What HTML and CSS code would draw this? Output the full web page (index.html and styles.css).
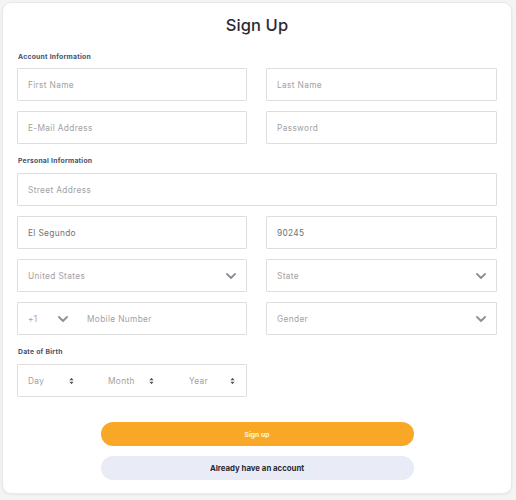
FILE: index.html
```html
<!DOCTYPE html>
<html lang="en">
<head>
<meta charset="utf-8">
<title>Sign Up</title>
<link rel="stylesheet" href="styles.css">
</head>
<body>
<div class="card">
  <h1 class="title">Sign Up</h1>

  <div class="section-label">Account Information</div>
  <div class="grid">
    <div class="field">First Name</div>
    <div class="field">Last Name</div>
    <div class="field">E-Mail Address</div>
    <div class="field">Password</div>
  </div>

  <div class="section-label">Personal Information</div>
  <div class="grid">
    <div class="field span2">Street Address</div>
    <div class="field filled">El Segundo</div>
    <div class="field filled">90245</div>
    <div class="field select"><span>United States</span>
      <svg class="chev" viewBox="0 0 10 6"><path d="M1 1l4 4 4-4"/></svg></div>
    <div class="field select"><span>State</span>
      <svg class="chev" viewBox="0 0 10 6"><path d="M1 1l4 4 4-4"/></svg></div>
    <div class="field phone">
      <span class="code">+1</span>
      <svg class="chev" viewBox="0 0 10 6"><path d="M1 1l4 4 4-4"/></svg>
      <span class="mobile">Mobile Number</span>
    </div>
    <div class="field select"><span>Gender</span>
      <svg class="chev" viewBox="0 0 10 6"><path d="M1 1l4 4 4-4"/></svg></div>
  </div>

  <div class="section-label">Date of Birth</div>
  <div class="grid">
    <div class="field dob">
      <div class="seg seg-day"><span>Day</span><svg class="updown" viewBox="0 0 6 9"><path d="M3 0.5L5.5 3.5H0.5Z M3 8.5L0.5 5.5H5.5Z"/></svg></div>
      <div class="seg seg-month"><span>Month</span><svg class="updown" viewBox="0 0 6 9"><path d="M3 0.5L5.5 3.5H0.5Z M3 8.5L0.5 5.5H5.5Z"/></svg></div>
      <div class="seg seg-year"><span>Year</span><svg class="updown" viewBox="0 0 6 9"><path d="M3 0.5L5.5 3.5H0.5Z M3 8.5L0.5 5.5H5.5Z"/></svg></div>
    </div>
  </div>

  <div class="actions">
    <button class="btn primary">Sign up</button>
    <button class="btn secondary">Already have an account</button>
  </div>
</div>
</body>
</html>
```
FILE: styles.css
```css
* { box-sizing: border-box; }
html, body { margin: 0; padding: 0; }
body {
  background: #f4f4f4;
  font-family: Inter, "Noto Sans", Arial, sans-serif;
  width: 516px;
  height: 500px;
  padding: 2px 4px 6px 2px;
}
.card {
  background: #ffffff;
  border: 1px solid #e9e9e9;
  border-radius: 9px;
  box-shadow: 0 1px 3px rgba(0,0,0,0.06);
  height: 492px;
  padding: 12px 14px 0 14px;
  display: flex;
  flex-direction: column;
}
.title {
  margin: 0;
  font-size: 16.5px;
  line-height: 20px;
  font-weight: 500;
  color: #2b2b33;
  text-align: center;
  letter-spacing: 0.1px;
}
.section-label {
  font-size: 6.8px;
  line-height: 10px;
  font-weight: 700;
  color: #46516b;
  letter-spacing: 0.25px;
  margin: 12px 0 7px 1px;
}
.title + .section-label { margin-top: 17px; margin-bottom: 6px; }
.grid {
  display: grid;
  grid-template-columns: 230px 231px;
  column-gap: 19px;
  row-gap: 10px;
}
.span2 { grid-column: 1 / span 2; }
.field {
  height: 33px;
  border: 1px solid #dedede;
  border-radius: 1px;
  display: flex;
  align-items: center;
  padding: 0 10px;
  font-size: 8.3px;
  color: #a2a2a2;
  letter-spacing: 0.35px;
}
.field.filled { color: #707070; }
.select { justify-content: space-between; padding-right: 10px; }
.chev {
  width: 10px;
  height: 6px;
  fill: none;
  stroke: #8a8f99;
  stroke-width: 1.8;
  stroke-linecap: round;
  stroke-linejoin: round;
}
.phone .code { width: 30px; }
.phone .chev { margin-right: 19px; }
.dob { padding: 0; }
.seg {
  flex: 1;
  display: flex;
  align-items: center;
  justify-content: space-between;
  height: 100%;
}
.seg-day { padding: 0 19px 0 10px; }
.seg-month { padding: 0 16px 0 15px; }
.seg-year { padding: 0 11px 0 19px; }
.updown { width: 5px; height: 8px; fill: #555; }
.actions {
  display: flex;
  flex-direction: column;
  align-items: center;
  gap: 10px;
  margin-top: 25px;
}
.btn {
  width: 313px;
  height: 24px;
  border: none;
  border-radius: 12px;
  font-family: inherit;
  font-size: 7.8px;
  font-weight: 700;
  cursor: pointer;
}
.primary { background: #f9a727; color: #fff4e0; font-size: 6.8px; }
.secondary { background: #e9ecf6; color: #2a2a33; }
```
